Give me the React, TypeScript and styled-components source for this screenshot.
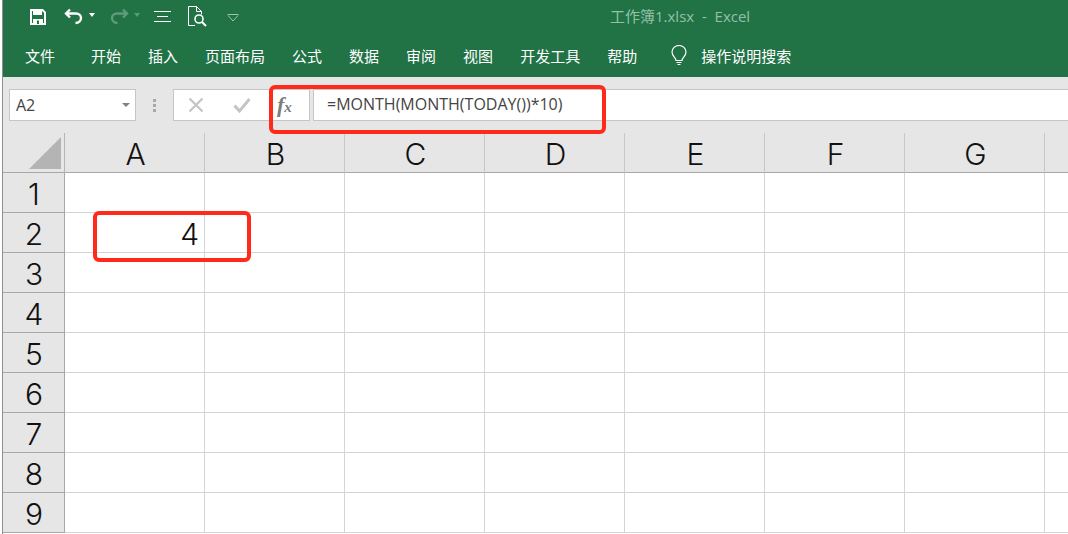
import styled, { createGlobalStyle } from 'styled-components';

const TABS = ['开始', '插入', '页面布局', '公式', '数据', '审阅', '视图', '开发工具', '帮助'];
const COLUMNS = ['A', 'B', 'C', 'D', 'E', 'F', 'G', ''];
const ROWS = [1, 2, 3, 4, 5, 6, 7, 8, 9];

const App = () => {
    return (
        <StyledWindow>
            <GlobalStyle />
            <StyledRibbon>
                <StyledTitleBar>
                    <StyledQuickAccess>
                        <svg width="16" height="16" viewBox="0 0 16 16">
                            <path d="M1 1h11.500L15 3.500V15H1z" fill="none" stroke="#fff" strokeWidth="2" />
                            <path d="M3 1h9v5H3z" fill="#fff" />
                            <path d="M3 10h10v5H3z" fill="#fff" />
                            <path d="M7 11.500h2V15H7z" fill="#217346" />
                        </svg>
                        <StyledUndo>
                            <svg width="20" height="18" viewBox="0 0 20 18">
                                <path d="M6 1.500 2 5.500l4 4M2.500 5.500H12c3 0 5 2 5 4.500s-2 5-5.500 5" fill="none" stroke="#fff" strokeWidth="2.400" />
                            </svg>
                            <StyledCaret $dim={false} />
                        </StyledUndo>
                        <StyledRedo>
                            <svg width="20" height="18" viewBox="0 0 20 18">
                                <path d="M14 1.500 18 5.500l-4 4M17.500 5.500H8c-3 0-5 2-5 4.500s2 5 5.500 5" fill="none" stroke="#5c9c7a" strokeWidth="2.400" />
                            </svg>
                            <StyledCaret $dim />
                        </StyledRedo>
                        <StyledAlignIcon width="17" height="11" viewBox="0 0 17 11">
                            <path d="M0 .5h17M3 5.500h11M0 10.500h17" stroke="#fff" strokeWidth="1" />
                        </StyledAlignIcon>
                        <StyledPreviewIcon width="19" height="21" viewBox="0 0 19 21">
                            <path d="M7 19.500H.5V.5h8l5 5v3M8.500.5v5h5" fill="none" stroke="#fff" />
                            <circle cx="11" cy="13" r="4" fill="none" stroke="#fff" strokeWidth="1.600" />
                            <path d="m14 16 4 4" stroke="#fff" strokeWidth="2" />
                        </StyledPreviewIcon>
                        <StyledMoreIcon width="12" height="8" viewBox="0 0 12 8">
                            <path d="M.5.500h11M1 1.500l5 5.500 5-5.500" fill="none" stroke="#9cc4ae" />
                        </StyledMoreIcon>
                    </StyledQuickAccess>
                    <StyledTitle>工作簿1.xlsx &nbsp;-&nbsp; Excel</StyledTitle>
                </StyledTitleBar>
                <StyledTabs>
                    <StyledFileTab>文件</StyledFileTab>
                    {TABS.map((tab) => (
                        <span key={tab}>{tab}</span>
                    ))}
                    <StyledSearch>
                        <svg width="16" height="21" viewBox="0 0 16 21">
                            <path d="M5 15.500C5 12.500 1 11.500 1 7a7 6.500 0 0 1 14 0c0 4.500-4 5.500-4 8.500z" fill="none" stroke="#fff" strokeWidth="1.200" />
                            <path d="M5.500 17.500h5M6.500 19.500h3" stroke="#fff" strokeWidth="1.200" />
                        </svg>
                        <span>操作说明搜索</span>
                    </StyledSearch>
                </StyledTabs>
            </StyledRibbon>

            <StyledFormulaBar>
                <StyledNameBox>
                    A2
                    <StyledNameCaret />
                </StyledNameBox>
                <StyledGrip />
                <StyledButtons>
                    <StyledBarIcon width="16" height="16" viewBox="0 0 16 16">
                        <path d="m1.500 1.500 13 13M14.500 1.500l-13 13" stroke="#c4c4c4" strokeWidth="2.200" />
                    </StyledBarIcon>
                    <StyledBarIcon width="18" height="16" viewBox="0 0 18 16">
                        <path d="m1.500 8.500 5 5.500 10-12" fill="none" stroke="#c4c4c4" strokeWidth="3" />
                    </StyledBarIcon>
                    <StyledFx>
                        f<sub>x</sub>
                    </StyledFx>
                </StyledButtons>
                <StyledFormula>=MONTH(MONTH(TODAY())*10)</StyledFormula>
            </StyledFormulaBar>

            <StyledSheet>
                <StyledCorner>
                    <StyledTriangle />
                </StyledCorner>
                {COLUMNS.map((column, index) => (
                    <StyledColumnHead key={index}>{column}</StyledColumnHead>
                ))}
                {ROWS.map((row) => (
                    <StyledRowGroup key={row}>
                        <StyledRowHead>{row}</StyledRowHead>
                        {COLUMNS.map((column, index) => (
                            <StyledCell key={index}>{column === 'A' && row === 2 ? '4' : ''}</StyledCell>
                        ))}
                    </StyledRowGroup>
                ))}
            </StyledSheet>

            <StyledFormulaMark />
            <StyledCellMark />
        </StyledWindow>
    );
};

const GlobalStyle = createGlobalStyle`
    html, body {
        margin: 0;
        padding: 0;
        background: #fff;
        overflow: hidden;
    }
`;

const StyledWindow = styled.div`
    position: relative;
    box-sizing: border-box;
    width: 1068px;
    height: 534px;
    padding-left: 3px;
    overflow: hidden;
    font-family: 'Open Sans', 'Noto Sans CJK SC', sans-serif;
    background: #fff;

    &::before {
        content: '';
        position: absolute;
        top: 0;
        bottom: 0;
        left: 2px;
        width: 1px;
        background: #8f8f8f;
    }
`;

const StyledRibbon = styled.header`
    height: 77px;
    background: #217346;
    color: #fff;
`;

const StyledTitleBar = styled.div`
    position: relative;
    display: flex;
    align-items: center;
    height: 33px;
`;

const StyledQuickAccess = styled.div`
    display: flex;
    align-items: center;
    padding-left: 27px;
`;

const StyledUndo = styled.div`
    display: flex;
    align-items: center;
    gap: 5px;
    margin-left: 18px;
`;

const StyledRedo = styled(StyledUndo)`
    margin-left: 14px;
`;

const StyledCaret = styled.i<{ $dim: boolean }>`
    width: 0;
    height: 0;
    margin-bottom: 3px;
    border-top: 4px solid ${({ $dim }) => ($dim ? '#5c9c7a' : '#fff')};
    border-left: 3px solid transparent;
    border-right: 3px solid transparent;
`;

const StyledAlignIcon = styled.svg`
    margin-left: 14px;
`;

const StyledPreviewIcon = styled.svg`
    margin-left: 17px;
`;

const StyledMoreIcon = styled.svg`
    margin-left: 20px;
    margin-top: 2px;
`;

const StyledTitle = styled.span`
    position: absolute;
    left: 607px;
    top: 6px;
    font-size: 15px;
    line-height: 20px;
    color: #93c0a8;
    white-space: pre;
`;

const StyledTabs = styled.nav`
    display: flex;
    align-items: center;
    gap: 27px;
    height: 44px;
    padding: 0 0 0 22px;
    font-size: 15px;
    color: #fff;

    span {
        white-space: nowrap;
    }
`;

const StyledFileTab = styled.span`
    margin-right: 9px;
`;

const StyledSearch = styled.div`
    display: flex;
    align-items: center;
    gap: 14px;
    margin-left: 7px;
`;

const StyledFormulaBar = styled.div`
    display: flex;
    align-items: center;
    box-sizing: border-box;
    height: 56px;
    padding: 12px 0 12px 6px;
    background: #e6e6e6;
`;

const StyledBox = styled.div`
    box-sizing: border-box;
    height: 32px;
    border: 1px solid #c6c6c6;
    background: #fff;
`;

const StyledNameBox = styled(StyledBox)`
    display: flex;
    align-items: center;
    justify-content: space-between;
    width: 127px;
    padding: 0 5px 0 6px;
    font-size: 16px;
    color: #444;
`;

const StyledNameCaret = styled.i`
    width: 0;
    height: 0;
    border-top: 4px solid #808080;
    border-left: 4px solid transparent;
    border-right: 4px solid transparent;
`;

const StyledGrip = styled.div`
    width: 3px;
    height: 13px;
    margin: 0 17px;
    background: repeating-linear-gradient(#a8a8a8 0 3px, transparent 3px 5px);
`;

const StyledButtons = styled(StyledBox)`
    display: flex;
    align-items: center;
    width: 137px;
    padding-left: 14px;
`;

const StyledBarIcon = styled.svg`
    margin-right: 29px;
`;

const StyledFx = styled.span`
    margin-left: -3px;
    font-family: 'Liberation Serif', serif;
    font-size: 22px;
    font-weight: 700;
    font-style: italic;
    line-height: 28px;
    color: #7d7d7d;

    sub {
        font-size: 15px;
        line-height: 0;
        vertical-align: baseline;
    }
`;

const StyledFormula = styled(StyledBox)`
    flex: 1;
    margin-left: 3px;
    padding-left: 13px;
    border-right: none;
    font-size: 16px;
    line-height: 29px;
    color: #444;
`;

const StyledSheet = styled.div`
    display: grid;
    grid-template-columns: 62px repeat(8, 140px);
    grid-auto-rows: 40px;
`;

const StyledRowGroup = styled.div`
    display: contents;
`;

const StyledHead = styled.div`
    display: flex;
    align-items: center;
    justify-content: center;
    box-sizing: border-box;
    padding-top: 3px;
    background: #e6e6e6;
    font-family: 'Inter', 'Liberation Sans', sans-serif;
    font-size: 30px;
    font-weight: 300;
    color: #111;
`;

const StyledCorner = styled(StyledHead)`
    position: relative;
    border-right: 1px solid #b5b5b5;
    border-bottom: 1px solid #a8a8a8;
`;

const StyledTriangle = styled.i`
    position: absolute;
    right: 3px;
    bottom: 3px;
    width: 0;
    height: 0;
    border-bottom: 32px solid #b4b4b4;
    border-left: 32px solid transparent;
`;

const StyledColumnHead = styled(StyledHead)`
    padding-left: 2px;
    border-right: 1px solid #c8c8c8;
    border-bottom: 1px solid #a8a8a8;
`;

const StyledRowHead = styled(StyledHead)`
    padding-left: 1px;
    border-right: 1px solid #a8a8a8;
    border-bottom: 1px solid #a8a8a8;
`;

const StyledCell = styled.div`
    display: flex;
    align-items: center;
    justify-content: flex-end;
    box-sizing: border-box;
    padding: 3px 5px 0 0;
    border-right: 1px solid #d4d4d4;
    border-bottom: 1px solid #d4d4d4;
    font-family: 'Inter', 'Liberation Sans', sans-serif;
    font-size: 30px;
    font-weight: 300;
    color: #111;
`;

const StyledMark = styled.div`
    position: absolute;
    box-sizing: border-box;
    border: 4px solid #ff2a1a;
    border-radius: 6px;
    pointer-events: none;
`;

const StyledFormulaMark = styled(StyledMark)`
    left: 269px;
    top: 85px;
    width: 337px;
    height: 49px;
`;

const StyledCellMark = styled(StyledMark)`
    left: 93px;
    top: 211px;
    width: 158px;
    height: 51px;
`;

export default App;
